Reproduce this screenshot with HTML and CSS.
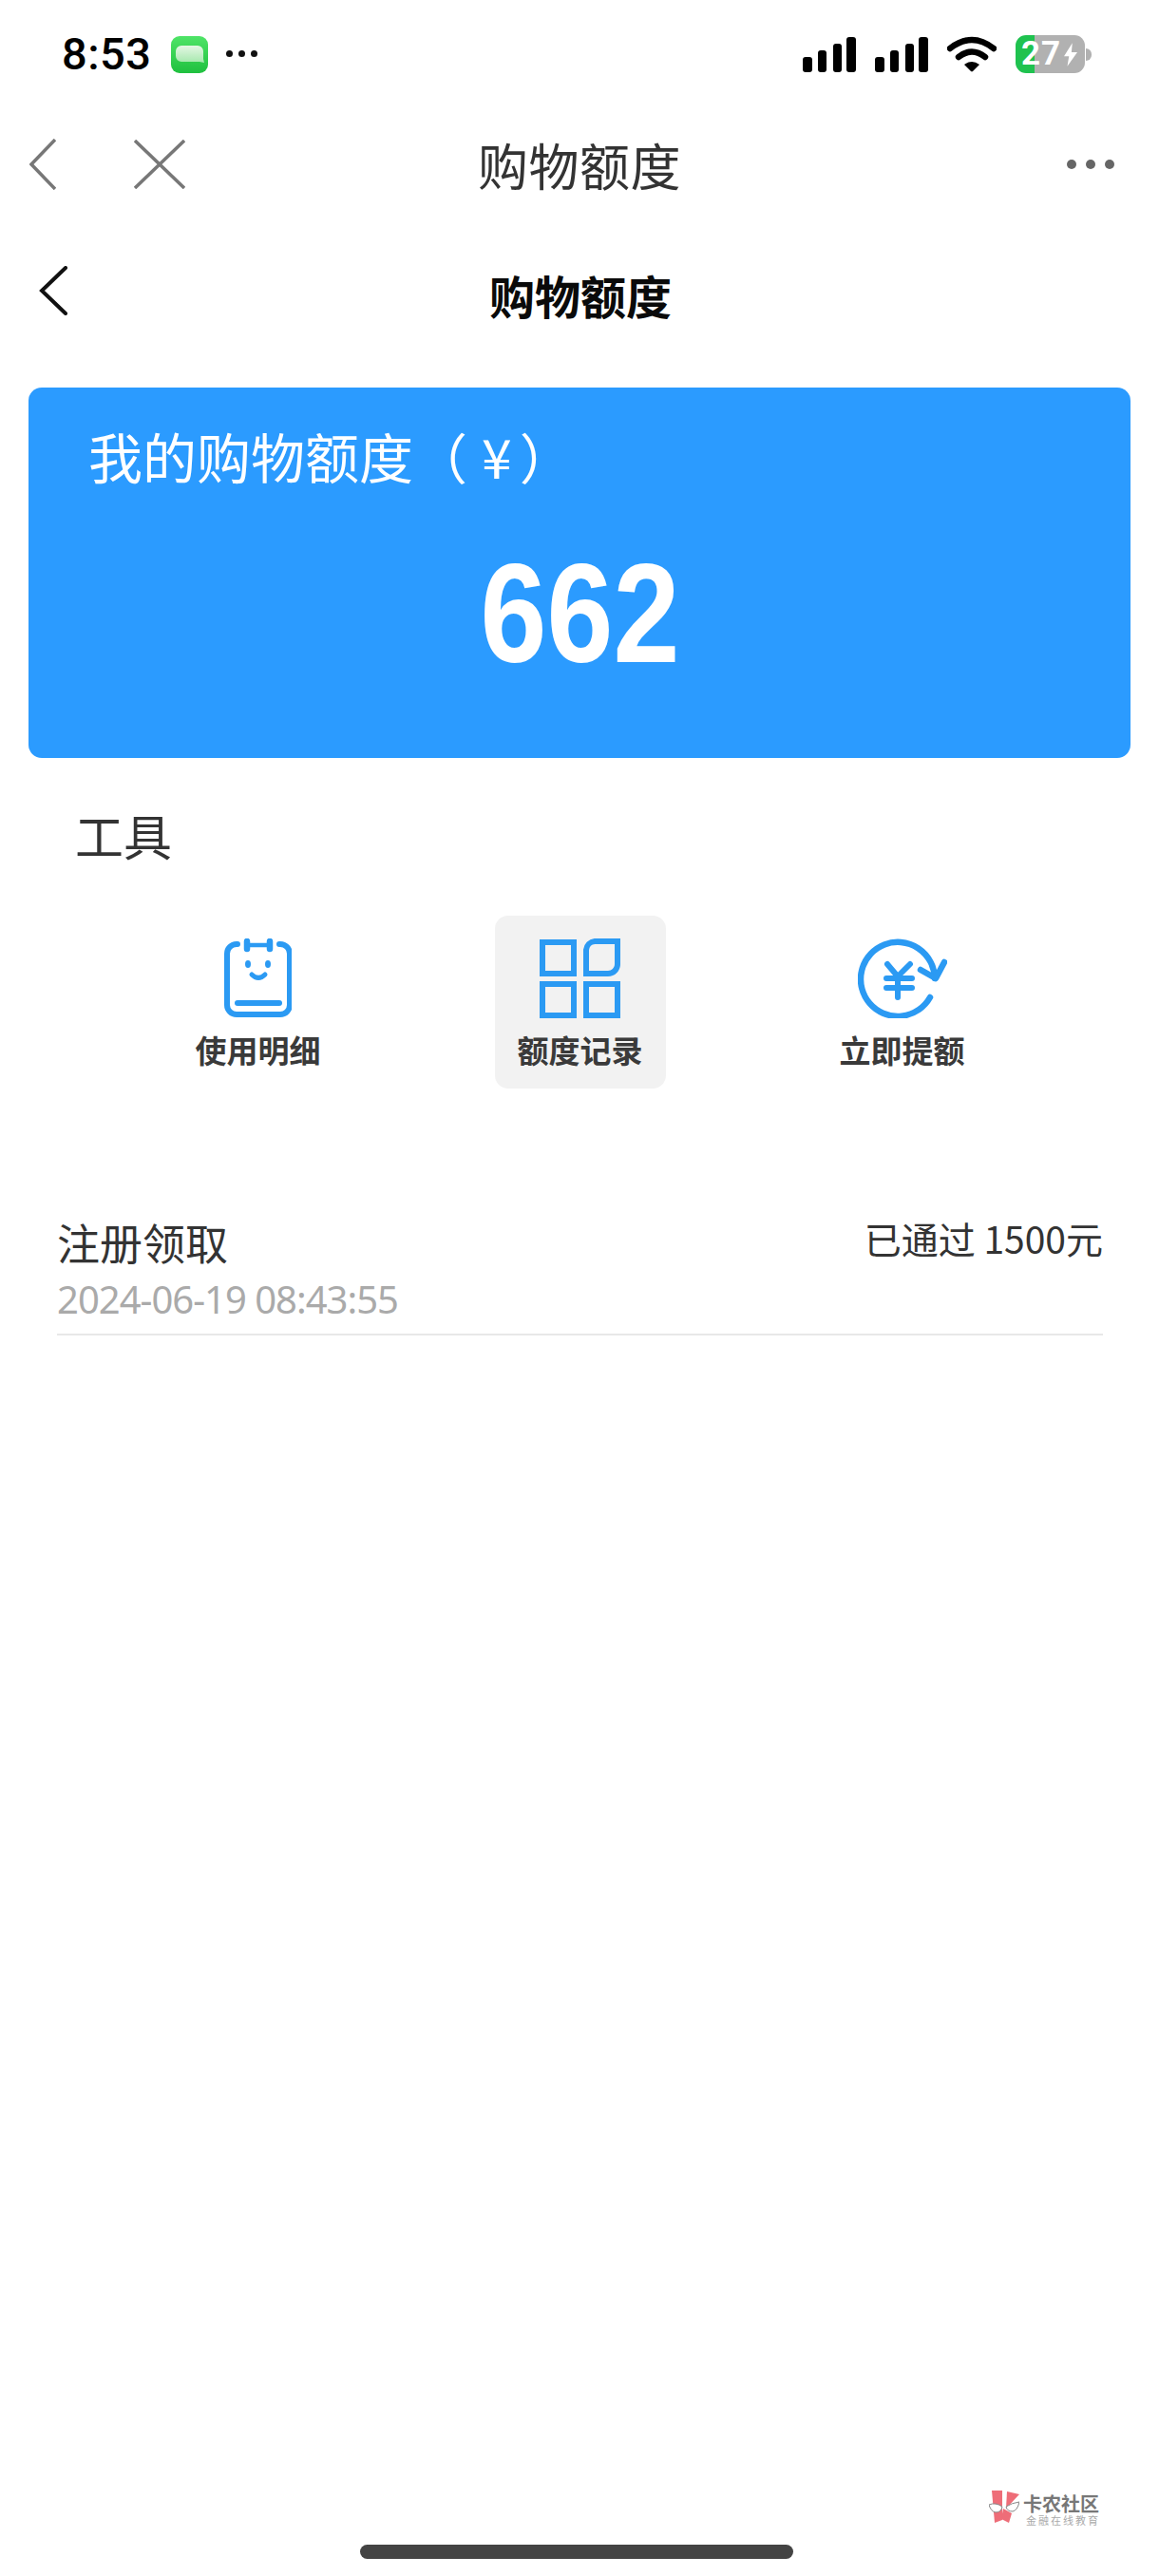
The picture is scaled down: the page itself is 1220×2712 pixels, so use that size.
FILE: index.html
```html
<!DOCTYPE html>
<html lang="zh-CN">
<head>
    <meta charset="UTF-8">
    <meta name="viewport" content="width=device-width, initial-scale=1.0">
    <title>购物额度</title>
    <link rel="stylesheet" href="styles.css">
</head>
<body>
    <div class="page">
        <div class="status-bar">
            <div class="status-left">
                <span class="clock">8:53</span>
                <svg class="msg-icon" viewBox="0 0 39 39">
                    <defs>
                        <linearGradient id="msgBg" x1="0" y1="0" x2="0" y2="1">
                            <stop offset="0" stop-color="#4fe467"/>
                            <stop offset="1" stop-color="#1fc03f"/>
                        </linearGradient>
                        <linearGradient id="msgBubble" x1="0" y1="0" x2="0" y2="1">
                            <stop offset="0" stop-color="#e4f7e4"/>
                            <stop offset="1" stop-color="#a5e8ad"/>
                        </linearGradient>
                    </defs>
                    <rect width="39" height="39" rx="9" fill="url(#msgBg)"/>
                    <path d="M11 10h17a6 6 0 0 1 6 6v8l1 4-5-1H11a6 6 0 0 1-6-6v-5a6 6 0 0 1 6-6z" fill="url(#msgBubble)"/>
                </svg>
                <span class="status-dots"><i></i><i></i><i></i></span>
            </div>
            <div class="status-right">
                <svg class="signal" viewBox="0 0 56 37"><rect x="0" y="21" width="10" height="16" rx="3"/><rect x="16" y="14" width="9" height="23" rx="3"/><rect x="32" y="7" width="9" height="30" rx="3"/><rect x="46" y="0" width="10" height="37" rx="3"/></svg>
                <svg class="signal" viewBox="0 0 56 37"><rect x="0" y="21" width="10" height="16" rx="3"/><rect x="16" y="14" width="9" height="23" rx="3"/><rect x="32" y="7" width="9" height="30" rx="3"/><rect x="46" y="0" width="10" height="37" rx="3"/></svg>
                <svg class="wifi" viewBox="0 0 52 38">
                    <path d="M3 13Q26-5 49 13" fill="none" stroke="#000" stroke-width="6.500" stroke-linecap="round"/>
                    <path d="M12 22Q26 11 40 22" fill="none" stroke="#000" stroke-width="6.500" stroke-linecap="round"/>
                    <path d="M18 30Q26 24 34 30L27 37a1.500 1.500 0 0 1-2 0z"/>
                </svg>
                <div class="battery">
                    <div class="battery-body">
                        <span class="battery-text">27</span>
                        <svg class="bolt" viewBox="0 0 16 28"><path d="M10 0L0 16h6L4 28 16 11H9z" fill="#fff"/></svg>
                    </div>
                    <span class="battery-nub"></span>
                </div>
            </div>
        </div>

        <div class="nav-bar">
            <div class="nav-left">
                <svg class="nav-back" viewBox="0 0 28 54"><path d="M27 1L2 27l25 26" fill="none" stroke="#777" stroke-width="3.500"/></svg>
                <svg class="nav-close" viewBox="0 0 54 52"><path d="M1 1l52 50M53 1L1 51" fill="none" stroke="#777" stroke-width="3.500"/></svg>
            </div>
            <div class="nav-title">购物额度</div>
            <span class="nav-more"><i></i><i></i><i></i></span>
        </div>

        <div class="sub-head">
            <svg class="sub-back" viewBox="0 0 30 52"><path d="M28 2L3 26l25 24" fill="none" stroke="#111" stroke-width="4" stroke-linecap="round"/></svg>
            <div class="sub-title">购物额度</div>
        </div>

        <div class="card">
            <div class="card-label">我的购物额度（<span class="card-unit">¥</span>）</div>
            <div class="card-num"><span>662</span></div>
        </div>

        <div class="tools-title">工具</div>
        <div class="tools">
            <div class="tool">
                <svg class="tool-icon" width="71" height="84" viewBox="0 0 71 84" fill="none" stroke="#2b9af3" stroke-linecap="round" stroke-linejoin="round">
                    <path d="M14 6H13A10 10 0 0 0 3 16V70A10 10 0 0 0 13 80H59A10 10 0 0 0 69 70V16A10 10 0 0 0 59 6H58" stroke-width="6"/>
                    <path d="M24 3V11M48 3V11" stroke-width="6.500"/>
                    <path d="M24 7H48" stroke-width="4.500"/>
                    <ellipse cx="25" cy="27" rx="3" ry="4" fill="#2b9af3" stroke="none"/>
                    <ellipse cx="46" cy="27" rx="3" ry="4" fill="#2b9af3" stroke="none"/>
                    <path d="M29 38Q36 45 43 38" stroke-width="5"/>
                    <path d="M14 68H58" stroke-width="6"/>
                </svg>
                <div class="tool-name">使用明细</div>
            </div>
            <div class="tool tool-active">
                <svg class="tool-icon" width="85" height="84" viewBox="0 0 85 84" fill="none" stroke="#2b9af3" stroke-width="6">
                    <rect x="3" y="4" width="33" height="33"/>
                    <path d="M58 3H82V27A10 10 0 0 1 72 37H49V12A10 10 0 0 1 58 3z"/>
                    <rect x="3" y="48" width="33" height="33"/>
                    <rect x="49" y="48" width="33" height="33"/>
                </svg>
                <div class="tool-name">额度记录</div>
            </div>
            <div class="tool">
                <svg class="tool-icon" width="94" height="84" viewBox="0 0 94 84" fill="none" stroke="#2b9af3" stroke-linecap="round" stroke-linejoin="round">
                    <path d="M76 62A39 39 0 1 1 81 42" stroke-width="6.500"/>
                    <path d="M66 33L82 42L91 25" stroke-width="6.500"/>
                    <path d="M31 27L42 40L55 27M30 42H57M30 52H57M42 40V62" stroke-width="6"/>
                </svg>
                <div class="tool-name">立即提额</div>
            </div>
        </div>

        <div class="record">
            <div class="record-left">
                <div class="record-name">注册领取</div>
                <div class="record-date">2024-06-19 08:43:55</div>
            </div>
            <div class="record-status">已通过 1500元</div>
        </div>

        <div class="footer">
            <div class="watermark">
                <svg class="wm-logo" viewBox="0 0 32 34">
                    <path d="M3 0H14V31L6 34z" fill="#ee6d78"/>
                    <path d="M19 1L32 4L18 19z" fill="#ee6d78"/>
                    <path d="M15 19L24 24L21 34L13 30z" fill="#ee6d78"/>
                    <path d="M0 15Q7 12 14 17Q13 23 7 23Q2 22 0 15z" fill="#fff" stroke="#888" stroke-width="1"/>
                    <path d="M32 12Q24 13 18 17Q19 22 25 22Q30 21 32 12z" fill="#fff" stroke="#888" stroke-width="1"/>
                </svg>
                <div class="wm-text">
                    <div class="wm-name">卡农社区</div>
                    <div class="wm-sub">金融在线教育</div>
                </div>
            </div>
            <div class="home-bar"></div>
        </div>
    </div>
</body>
</html>
```

FILE: styles.css
```css
* { box-sizing: border-box; }
body { margin: 0; background: #fff; color: #333; font-family: "Noto Sans CJK SC", "Noto Sans", sans-serif; }
i { display: block; }
svg { display: block; flex: none; }
.page { width: 1220px; height: 2712px; display: flex; flex-direction: column; overflow: hidden; }

/* status bar */
.status-bar { height: 114px; padding: 0 71px 0 65px; display: flex; justify-content: space-between; align-items: center; }
.status-left { display: flex; align-items: center; }
.clock { font-family: Roboto, sans-serif; font-size: 47px; font-weight: 500; color: #000; line-height: 46px; width: 115px; letter-spacing: 0.5px; }
.msg-icon { width: 39px; height: 39px; }
.status-dots { display: flex; gap: 6px; margin-left: 19px; margin-top: -1px; }
.status-dots i { width: 7px; height: 7px; border-radius: 50%; background: #111; }
.status-right { display: flex; align-items: center; }
.signal { width: 56px; height: 37px; margin-right: 20px; }
.wifi { width: 52px; height: 38px; margin-right: 20px; }
.battery { display: flex; align-items: center; }
.battery-body { width: 73px; height: 40px; border-radius: 11px; background: linear-gradient(90deg, #1fc24f 0, #1fc24f 20px, #b1b1b1 20px); display: flex; align-items: center; padding-left: 6px; }
.battery-text { font-family: Roboto, sans-serif; font-size: 35px; font-weight: 700; color: #fff; line-height: 40px; letter-spacing: 1px; }
.bolt { width: 14px; height: 25px; margin-left: 3px; }
.battery-nub { width: 6px; height: 13px; background: #b1b1b1; border-radius: 0 6px 6px 0; margin-left: 1px; }

/* nav */
.nav-bar { height: 118px; padding: 0 47px 0 31px; display: grid; grid-template-columns: 1fr auto 1fr; align-items: center; }
.nav-left { display: flex; align-items: center; gap: 82px; }
.nav-back { width: 28px; height: 54px; }
.nav-close { width: 54px; height: 52px; }
.nav-title { font-size: 53px; line-height: 70px; letter-spacing: 0.5px; color: #333; margin-left: 16px; }
.nav-more { display: flex; gap: 10px; justify-self: end; }
.nav-more i { width: 10px; height: 10px; border-radius: 50%; background: #666; }

.sub-head { height: 176px; padding: 0 0 0 41px; display: flex; align-items: center; }
.sub-back { width: 30px; height: 52px; margin-top: -28px; }
.sub-title { font-size: 48px; font-weight: 700; line-height: 60px; color: #0a0a0a; margin-left: 444px; margin-top: -21px; }

/* blue card */
.card { height: 390px; margin: 0 30px; background: #2b9bff; border-radius: 14px; color: #fff; padding: 33px 0 0 63px; }
.card-label { font-size: 57px; line-height: 76px; }
.card-unit { padding: 0 8px 0 15px; }
.card-num { font-family: "Liberation Sans", sans-serif; font-size: 148px; font-weight: 700; line-height: 180px; text-align: center; margin: 39px 0 0 -63px; }
.card-num span { display: inline-block; transform: scaleX(0.85); }

/* tools */
.tools-title { font-size: 51px; line-height: 70px; color: #333; padding-left: 79px; margin-top: 46px; }
.tools { display: grid; grid-template-columns: repeat(3, 339px); padding-left: 102px; margin-top: 50px; }
.tool { justify-self: center; width: 180px; height: 182px; padding-top: 24px; display: flex; flex-direction: column; align-items: center; border-radius: 14px; }
.tool-active { background: #f2f2f2; }
.tool-name { font-size: 33px; font-weight: 700; line-height: 40px; color: #3a3a3a; margin-top: 13px; white-space: nowrap; }

/* record */
.record { margin: 127px 59px 0 60px; padding-bottom: 11px; border-bottom: 2px solid #e8e8e8; display: flex; justify-content: space-between; align-items: flex-start; }
.record-left { padding-top: 5px; }
.record-name { font-size: 45px; line-height: 60px; color: #333; }
.record-date { font-family: "Noto Sans", sans-serif; font-size: 40px; line-height: 50px; color: #aaa; margin-top: 5px; letter-spacing: -1px; }
.record-status { font-size: 39px; line-height: 60px; color: #333; }

/* bottom */
.footer { margin-top: auto; display: flex; flex-direction: column; align-items: center; padding-bottom: 18px; }
.watermark { align-self: flex-end; margin-right: 62px; display: flex; align-items: flex-start; gap: 4px; }
.wm-logo { width: 32px; height: 34px; }
.wm-text { padding-top: 4px; }
.wm-name { font-size: 20px; font-weight: 700; line-height: 20px; color: #777; white-space: nowrap; }
.wm-sub { font-size: 11px; line-height: 12px; color: #aaa; letter-spacing: 2px; margin: 1px 0 0 3px; white-space: nowrap; }
.home-bar { width: 456px; height: 15px; border-radius: 8px; background: #444; margin-top: 20px; margin-left: -6px; }
```
